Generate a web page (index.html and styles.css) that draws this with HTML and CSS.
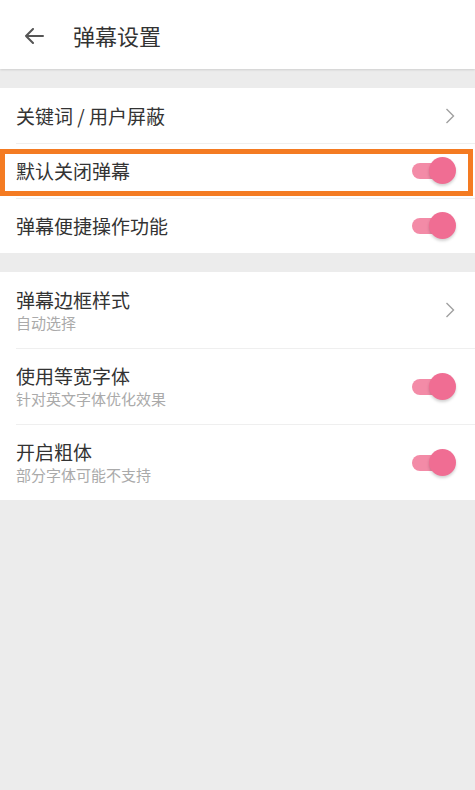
FILE: index.html
```html
<!DOCTYPE html>
<html lang="zh-CN">
<head>
<meta charset="utf-8">
<title>弹幕设置</title>
<link rel="stylesheet" href="styles.css">
</head>
<body>
<header class="topbar">
  <svg class="back" width="20" height="16" viewBox="0 0 20 16"><path d="M19 8H2M9 1L2 8l7 7" fill="none" stroke="#555" stroke-width="2" stroke-linecap="round" stroke-linejoin="round"/></svg>
  <h1 class="title">弹幕设置</h1>
</header>

<section class="group">
  <div class="row">
    <span class="label">关键词 / 用户屏蔽</span>
    <svg class="chev" width="10" height="16" viewBox="0 0 10 16"><path d="M1.5 1l7 7-7 7" fill="none" stroke="#a0a0a0" stroke-width="1.4"/></svg>
  </div>
  <div class="row hl">
    <span class="label">默认关闭弹幕</span>
    <span class="switch"><span class="track"></span><span class="knob"></span></span>
    <span class="mark"></span>
  </div>
  <div class="row">
    <span class="label">弹幕便捷操作功能</span>
    <span class="switch"><span class="track"></span><span class="knob"></span></span>
  </div>
</section>

<section class="group">
  <div class="row tall">
    <div class="texts"><span class="label">弹幕边框样式</span><span class="sub">自动选择</span></div>
    <svg class="chev" width="10" height="16" viewBox="0 0 10 16"><path d="M1.5 1l7 7-7 7" fill="none" stroke="#a0a0a0" stroke-width="1.4"/></svg>
  </div>
  <div class="row tall">
    <div class="texts"><span class="label">使用等宽字体</span><span class="sub">针对英文字体优化效果</span></div>
    <span class="switch"><span class="track"></span><span class="knob"></span></span>
  </div>
  <div class="row tall">
    <div class="texts"><span class="label">开启粗体</span><span class="sub">部分字体可能不支持</span></div>
    <span class="switch"><span class="track"></span><span class="knob"></span></span>
  </div>
</section>
</body>
</html>
```

FILE: styles.css
```css
html, body {
  margin: 0;
  padding: 0;
}
body {
  width: 475px;
  min-height: 790px;
  background: #ececec;
  font-family: "Noto Sans CJK SC", "Noto Sans", sans-serif;
  color: #333;
}
.topbar {
  height: 69px;
  background: #fff;
  display: flex;
  align-items: center;
  box-shadow: 0 1px 2px rgba(0,0,0,0.12);
  margin-bottom: 19px;
}
.back {
  margin-left: 24px;
  margin-top: 2px;
}
.title {
  margin: 0 0 0 29px;
  font-size: 22px;
  font-weight: normal;
  color: #333;
  line-height: 30px;
}
.group {
  background: #fff;
  margin-bottom: 19px;
}
.row {
  position: relative;
  height: 55px;
  display: flex;
  align-items: center;
  justify-content: space-between;
  padding: 0 19px 0 16px;
}
.row + .row::before {
  content: "";
  position: absolute;
  top: 0;
  left: 16px;
  right: 0;
  height: 1px;
  background: #efefef;
}
.row.tall {
  height: 76px;
}
.label {
  font-size: 19px;
  line-height: 24px;
  color: #333;
}
.texts {
  display: flex;
  flex-direction: column;
  margin-top: 1px;
}
.sub {
  font-size: 15px;
  line-height: 22px;
  color: #aaa;
}
.chev {
  margin-right: 1px;
}
.switch {
  position: relative;
  width: 44px;
  height: 27px;
  flex: none;
}
.track {
  position: absolute;
  left: 0;
  top: 6px;
  width: 38px;
  height: 16px;
  border-radius: 8px;
  background: #f38ba7;
}
.knob {
  position: absolute;
  right: 0;
  top: 0;
  width: 27px;
  height: 27px;
  border-radius: 50%;
  background: #f06d93;
  box-shadow: 0 2px 3px rgba(0,0,0,0.18);
}
.mark {
  position: absolute;
  left: 0;
  top: 6px;
  width: 473px;
  height: 47px;
  box-sizing: border-box;
  border: 5px solid #f47b22;
}
```
